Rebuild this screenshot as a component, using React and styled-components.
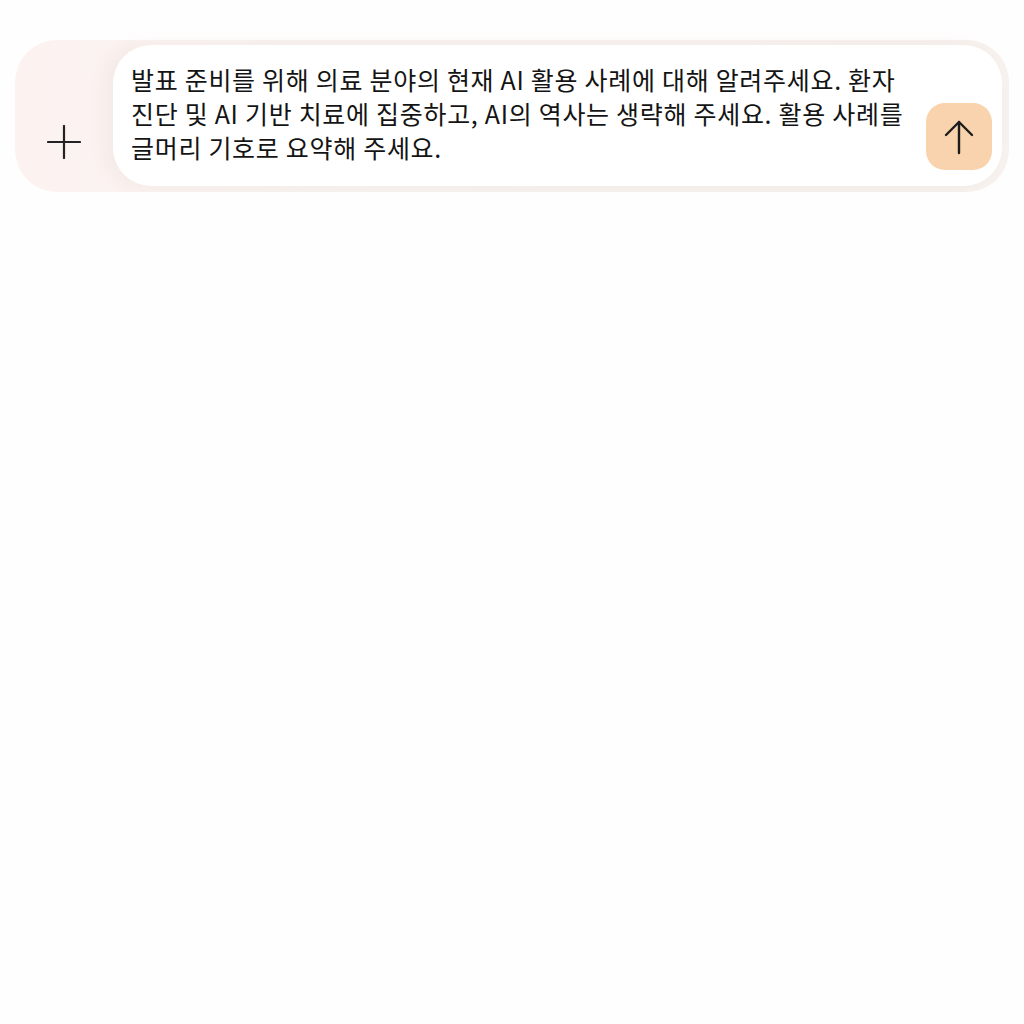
import React from "react";
import styled, { createGlobalStyle } from "styled-components";

const Global = createGlobalStyle`
  html, body { margin: 0; padding: 0; background: #fffefe; }
  body { font-family: "Noto Sans CJK KR", "Noto Sans", sans-serif; }
`;

const Page = styled.div`
  padding: 40px 15px 0 15px;
`;

const Composer = styled.div`
  display: flex;
  align-items: stretch;
  height: 152px;
  box-sizing: border-box;
  padding: 5px 7px 6px 0;
  border-radius: 42px;
  background: linear-gradient(90deg, #fcf3f1 0%, #f8f3f0 30%, #f7f2ef 100%);
`;

const Side = styled.div`
  width: 98px;
  flex: none;
  display: flex;
  align-items: flex-end;
  justify-content: center;
  padding-bottom: 20px;
  box-sizing: border-box;
`;

const IconButton = styled.button`
  width: 48px;
  height: 48px;
  border: none;
  background: transparent;
  padding: 0;
  display: flex;
  align-items: center;
  justify-content: center;
  color: #222;
  cursor: pointer;
`;

const Field = styled.div`
  flex: 1;
  display: flex;
  align-items: flex-end;
  background: #ffffff;
  border-radius: 38px;
  box-shadow: -8px 0 16px rgba(215, 195, 185, 0.18);
  padding: 0 10px 16px 18px;
`;

const Text = styled.div`
  flex: 1;
  align-self: flex-start;
  padding-top: 17px;
  padding-right: 8px;
  font-size: 25px;
  line-height: 34px;
  color: #141414;
  letter-spacing: 0.7px;
  word-break: keep-all;
`;

const Send = styled.button`
  width: 66px;
  height: 67px;
  flex: none;
  border: none;
  border-radius: 19px;
  background: #f8d3ad;
  display: flex;
  align-items: center;
  justify-content: center;
  padding: 0;
  color: #1c1c1c;
  cursor: pointer;
`;

export default function App() {
  return (
    <>
      <Global />
      <Page>
        <Composer>
          <Side>
            <IconButton aria-label="add">
              <svg width="34" height="34" viewBox="0 0 34 34" fill="none" stroke="currentColor" strokeWidth="2.2" strokeLinecap="round">
                <line x1="17" y1="1" x2="17" y2="33" />
                <line x1="1" y1="17" x2="33" y2="17" />
              </svg>
            </IconButton>
          </Side>
          <Field>
            <Text>
              발표 준비를 위해 의료 분야의 현재 AI 활용 사례에 대해 알려주세요. 환자 진단 및 AI 기반 치료에 집중하고, AI의 역사는 생략해 주세요. 활용 사례를 글머리 기호로 요약해 주세요.
            </Text>
            <Send aria-label="send">
              <svg width="34" height="36" viewBox="0 0 34 36" fill="none" stroke="currentColor" strokeWidth="2.4" strokeLinecap="round" strokeLinejoin="round">
                <line x1="17" y1="3" x2="17" y2="34" />
                <polyline points="4,16 17,3 30,16" />
              </svg>
            </Send>
          </Field>
        </Composer>
      </Page>
    </>
  );
}
